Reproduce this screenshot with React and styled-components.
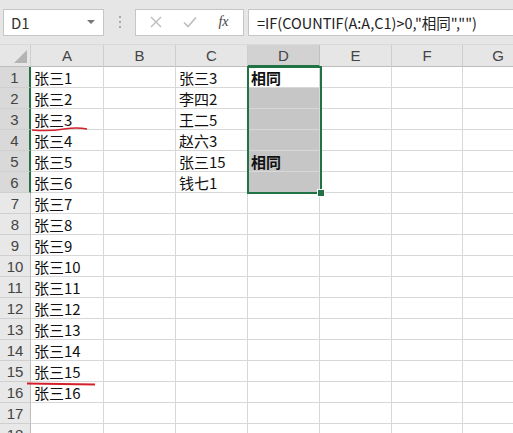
import React from 'react';
import styled, { createGlobalStyle } from 'styled-components';

const GlobalStyle = createGlobalStyle`
  html, body {
    margin: 0;
    padding: 0;
    background: #ffffff;
    overflow: hidden;
  }
  body {
    font-family: "Noto Sans CJK SC", "Noto Sans", sans-serif;
  }
`;

const colA = Array.from({ length: 16 }, (_, i) => `张三${i + 1}`);
const colC = ['张三3', '李四2', '王二5', '赵六3', '张三15', '钱七1'];
const colD = ['相同', '', '', '', '相同', ''];
const columns = ['A', 'B', 'C', 'D', 'E', 'F', 'G'];
const ROWS = 18;

const Page = styled.div`
  width: 513px;
  height: 433px;
  overflow: hidden;
  background: #fff;
`;

const Toolbar = styled.div`
  height: 45px;
  background: #e6e6e6;
  display: flex;
  align-items: center;
  padding: 0 0 0 3px;
  box-sizing: border-box;
  border-bottom: 1px solid #d9d9d9;
`;

const NameBox = styled.div`
  width: 101px;
  height: 27px;
  box-sizing: border-box;
  background: #fff;
  border: 1px solid #c6c6c6;
  display: flex;
  align-items: center;
  justify-content: space-between;
  padding: 0 8px 0 7px;
  font-size: 15px;
  color: #333;
`;

const Caret = styled.span`
  width: 0;
  height: 0;
  border-left: 4px solid transparent;
  border-right: 4px solid transparent;
  border-top: 4px solid #777;
`;

const Dots = styled.div`
  width: 31px;
  display: flex;
  flex-direction: column;
  align-items: center;
  gap: 3px;
  span {
    width: 2px;
    height: 2px;
    background: #a8a8a8;
  }
`;

const FxBox = styled.div`
  width: 109px;
  height: 27px;
  box-sizing: border-box;
  background: #fff;
  border: 1px solid #c6c6c6;
  display: flex;
  align-items: center;
  justify-content: space-around;
  padding: 0 4px;
`;

const Fx = styled.span`
  font-family: "Liberation Serif", serif;
  font-style: italic;
  color: #444;
  font-size: 14px;
`;

const FormulaBar = styled.div`
  flex: 1;
  margin-left: 4px;
  height: 27px;
  box-sizing: border-box;
  background: #fff;
  border: 1px solid #c6c6c6;
  border-right: none;
  display: flex;
  align-items: center;
  padding-left: 8px;
  font-size: 14.5px;
  color: #222;
  white-space: nowrap;
  overflow: hidden;
`;

const Sheet = styled.div`
  position: relative;
  display: grid;
  grid-template-columns: 31px 73px 72px 72px 72px 72px 71px 71px 60px;
  grid-template-rows: 22px;
  grid-auto-rows: 21px;
`;

const HeaderCell = styled.div`
  background: ${p => (p.$active ? '#d2d2d2' : '#e6e6e6')};
  border-right: 1px solid ${p => (p.$active ? '#c0c0c0' : '#cfcfcf')};
  border-bottom: ${p => (p.$active ? '2px solid #217346' : '1px solid #bdbdbd')};
  box-sizing: border-box;
  display: flex;
  align-items: center;
  justify-content: center;
  font-size: 15px;
  color: #444;
  font-family: "Liberation Sans", "Noto Sans", sans-serif;
`;

const Corner = styled(HeaderCell)`
  position: relative;
  &::after {
    content: '';
    position: absolute;
    right: 3px;
    bottom: 3px;
    width: 0;
    height: 0;
    border-left: 13px solid transparent;
    border-bottom: 13px solid #b4b4b4;
  }
`;

const RowHead = styled.div`
  background: ${p => (p.$active ? '#d9d9d9' : '#e8e8e8')};
  border-bottom: 1px solid #cfcfcf;
  border-right: ${p => (p.$active ? '2px solid #217346' : '1px solid #bdbdbd')};
  box-sizing: border-box;
  display: flex;
  align-items: center;
  justify-content: center;
  font-size: 15px;
  color: #444;
  font-family: "Liberation Sans", "Noto Sans", sans-serif;
`;

const Cell = styled.div`
  background: ${p => (p.$shade ? '#c6c6c6' : '#fff')};
  border-right: 1px solid #d8d8d8;
  border-bottom: 1px solid #d8d8d8;
  box-sizing: border-box;
  display: flex;
  align-items: center;
  padding-left: 3px;
  font-size: 15px;
  font-weight: ${p => (p.$bold ? 700 : 400)};
  color: #111;
  white-space: nowrap;
`;

const Selection = styled.div`
  position: absolute;
  left: 247px;
  top: 21px;
  width: 75px;
  height: 128px;
  border: 2px solid #217346;
  box-sizing: border-box;
  pointer-events: none;
  &::after {
    content: '';
    position: absolute;
    right: -5px;
    bottom: -5px;
    width: 6px;
    height: 6px;
    background: #217346;
    border: 1px solid #fff;
  }
`;

const RedMark = styled.svg`
  position: absolute;
  overflow: visible;
  pointer-events: none;
`;

export default function App() {
  const cells = [];
  cells.push(<Corner key="corner" />);
  columns.forEach(c => {
    cells.push(
      <HeaderCell key={`h${c}`} $active={c === 'D'}>
        {c}
      </HeaderCell>
    );
  });
  cells.push(<HeaderCell key="hx" />);

  for (let r = 0; r < ROWS; r++) {
    const active = r < 6;
    cells.push(
      <RowHead key={`r${r}`} $active={active}>
        {r + 1}
      </RowHead>
    );
    cells.push(<Cell key={`a${r}`}>{colA[r] || ''}</Cell>);
    cells.push(<Cell key={`b${r}`} />);
    cells.push(<Cell key={`c${r}`}>{colC[r] || ''}</Cell>);
    cells.push(
      <Cell key={`d${r}`} $shade={r > 0 && r < 6} $bold>
        {colD[r] || ''}
      </Cell>
    );
    cells.push(<Cell key={`e${r}`} />);
    cells.push(<Cell key={`f${r}`} />);
    cells.push(<Cell key={`g${r}`} />);
    cells.push(<Cell key={`x${r}`} />);
  }

  return (
    <Page>
      <GlobalStyle />
      <Toolbar>
        <NameBox>
          D1
          <Caret />
        </NameBox>
        <Dots>
          <span />
          <span />
          <span />
        </Dots>
        <FxBox>
          <svg width="12" height="12" viewBox="0 0 12 12">
            <path d="M1 1 L11 11 M11 1 L1 11" stroke="#bdbdbd" strokeWidth="1.4" fill="none" />
          </svg>
          <svg width="14" height="12" viewBox="0 0 14 12">
            <path d="M1 6.5 L5 10.5 L13 1.5" stroke="#bdbdbd" strokeWidth="1.6" fill="none" />
          </svg>
          <Fx>fx</Fx>
        </FxBox>
        <FormulaBar>=IF(COUNTIF(A:A,C1)&gt;0,"相同","")</FormulaBar>
      </Toolbar>
      <Sheet>
        {cells}
        <Selection />
        <RedMark style={{ left: 32, top: 81 }} width="56" height="8">
          <path d="M0 4 C 12 5, 20 5, 32 3 C 42 1.5, 50 2, 55 3" stroke="#d3202a" strokeWidth="1.6" fill="none" />
        </RedMark>
        <RedMark style={{ left: 27, top: 336 }} width="70" height="6">
          <path d="M0 2.5 L 68 3.5" stroke="#d3202a" strokeWidth="1.8" fill="none" />
        </RedMark>
      </Sheet>
    </Page>
  );
}
